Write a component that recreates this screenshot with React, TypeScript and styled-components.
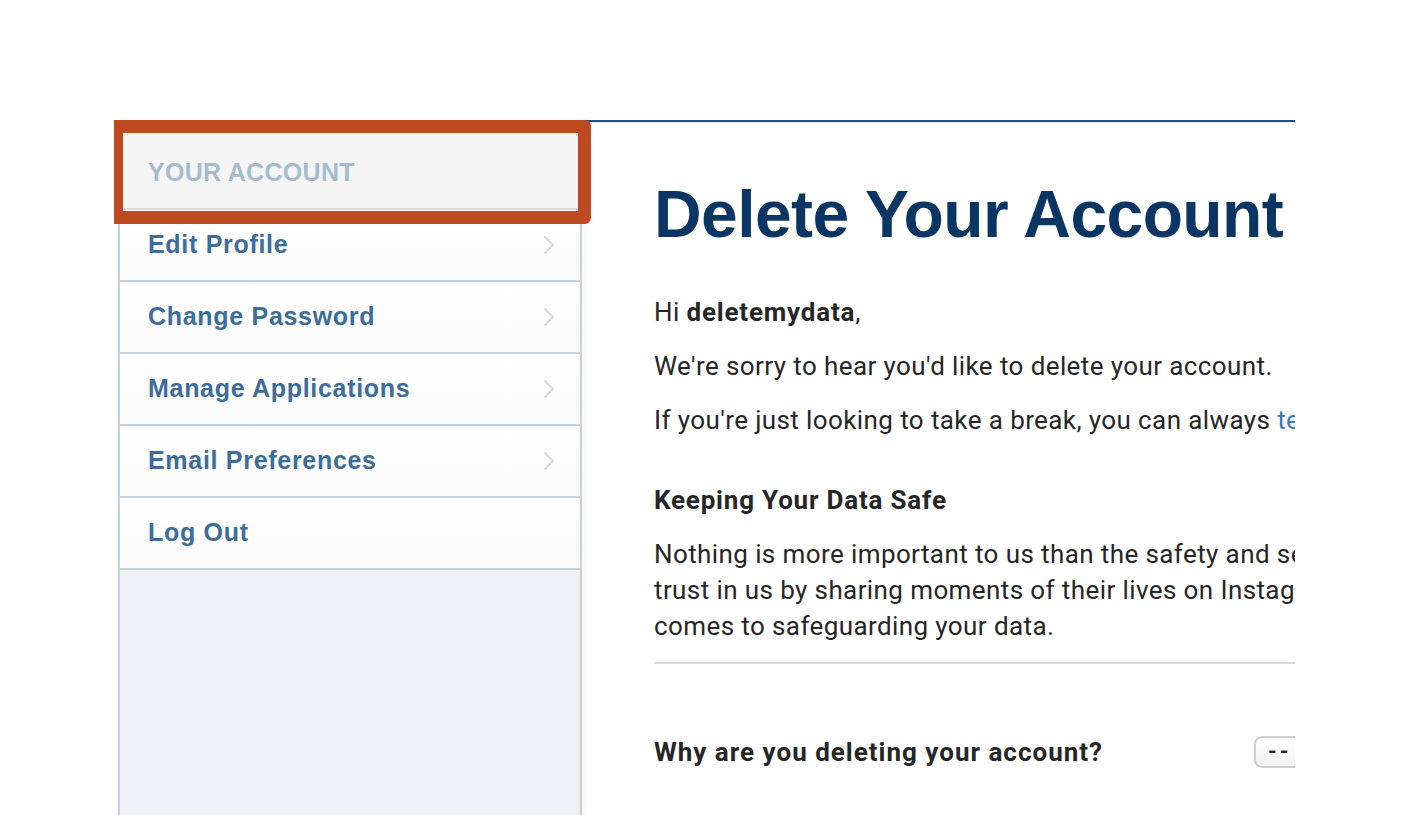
import React from 'react';
import styled, { createGlobalStyle } from 'styled-components';

const GlobalStyle = createGlobalStyle`
  html, body {
    margin: 0;
    padding: 0;
    background: #ffffff;
    overflow: hidden;
  }
  body {
    font-family: Roboto, "Liberation Sans", Arial, sans-serif;
  }
`;

const menuItems = [
  { label: 'Edit Profile', arrow: true },
  { label: 'Change Password', arrow: true },
  { label: 'Manage Applications', arrow: true },
  { label: 'Email Preferences', arrow: true },
  { label: 'Log Out', arrow: false },
];

const safetyLines = [
  'Nothing is more important to us than the safety and security of the people who place their',
  'trust in us by sharing moments of their lives on Instagram. We use industry-leading protections when it',
  'comes to safeguarding your data.',
];

function Chevron() {
  return (
    <svg width="14" height="22" viewBox="0 0 14 22" fill="none">
      <path d="M3 3l8 8-8 8" stroke="#d6d9dc" strokeWidth="2.2" strokeLinecap="round" strokeLinejoin="round" />
    </svg>
  );
}

export default function App() {
  return (
    <>
      <GlobalStyle />
      <Page>
        <Layout>
          <Sidebar>
            <SideHeader>Your Account</SideHeader>
            {menuItems.map((item) => (
              <MenuRow key={item.label}>
                <MenuLabel>{item.label}</MenuLabel>
                {item.arrow && <Chevron />}
              </MenuRow>
            ))}
            <SideFill />
            <Highlight />
          </Sidebar>
          <Main>
            <Title>Delete Your Account</Title>
            <Para>
              Hi <b>deletemydata</b>,
            </Para>
            <Para>We're sorry to hear you'd like to delete your account.</Para>
            <Para>
              If you're just looking to take a break, you can always <Link>temporarily disable your account</Link> instead.
            </Para>
            <SubHead>Keeping Your Data Safe</SubHead>
            <Body>
              {safetyLines.map((line) => (
                <BodyLine key={line}>{line}</BodyLine>
              ))}
            </Body>
            <Divider />
            <ReasonRow>
              <ReasonLabel>Why are you deleting your account?</ReasonLabel>
              <Select>--</Select>
            </ReasonRow>
          </Main>
        </Layout>
      </Page>
    </>
  );
}

const Page = styled.div`
  width: 1405px;
  height: 815px;
  overflow: hidden;
  padding-top: 120px;
  box-sizing: border-box;
`;

const Layout = styled.div`
  display: flex;
  margin-left: 118px;
  width: 1177px;
`;

const Sidebar = styled.nav`
  position: relative;
  width: 464px;
  flex-shrink: 0;
  display: flex;
  flex-direction: column;
  border-left: 2px solid #c6d1dc;
  border-right: 2px solid #c6d1dc;
  box-sizing: border-box;
  box-shadow: 3px 0 4px rgba(0, 0, 0, 0.04);
`;

const SideHeader = styled.div`
  height: 90px;
  box-sizing: border-box;
  background: #f5f5f5;
  border-bottom: 2px solid #dadada;
  padding: 38px 0 0 28px;
  font-family: "Liberation Sans", Arial, sans-serif;
  font-weight: 700;
  font-size: 25px;
  letter-spacing: 0.3px;
  text-transform: uppercase;
  color: #a6bccd;
`;

const MenuRow = styled.div`
  height: 72px;
  box-sizing: border-box;
  display: flex;
  align-items: center;
  justify-content: space-between;
  padding: 0 24px 0 28px;
  background: linear-gradient(#ffffff, #fafafa);
  border-bottom: 2px solid #c6d1dc;
`;

const MenuLabel = styled.span`
  font-family: "Liberation Sans", Arial, sans-serif;
  font-weight: 700;
  font-size: 25px;
  letter-spacing: 0.7px;
  color: #3d6d9a;
  margin-top: -1px;
`;

const SideFill = styled.div`
  height: 260px;
  background: #edf1f4;
`;

const Highlight = styled.div`
  position: absolute;
  left: -6px;
  top: 0;
  width: 477px;
  height: 104px;
  box-sizing: border-box;
  border: 13px solid #bd4a20;
  border-left-width: 9px;
  border-radius: 0 6px 6px 0;
`;

const Main = styled.main`
  flex: 1;
  min-width: 0;
  overflow: hidden;
  border-top: 2px solid #1f4e79;
  box-shadow: inset 0 3px 3px -2px rgba(0, 0, 0, 0.12);
  padding: 48px 0 0 72px;
  white-space: nowrap;
`;

const Title = styled.h1`
  margin: 0 0 36px;
  font-family: "Liberation Sans", Arial, sans-serif;
  font-weight: 700;
  font-size: 66px;
  line-height: 88px;
  letter-spacing: -0.6px;
  color: #0b3563;
`;

const Para = styled.p`
  margin: 0 0 18px;
  font-size: 26px;
  line-height: 36px;
  letter-spacing: 0.4px;
  color: #262626;
  b {
    font-weight: 700;
    letter-spacing: 0.8px;
  }
`;

const Link = styled.span`
  color: #3e7bb0;
`;

const SubHead = styled.h3`
  margin: 44px 0 18px;
  font-size: 26px;
  line-height: 36px;
  font-weight: 700;
  letter-spacing: 0.8px;
  color: #262626;
`;

const Body = styled.div`
  display: flex;
  flex-direction: column;
`;

const BodyLine = styled.span`
  font-size: 26px;
  line-height: 36px;
  letter-spacing: 0.4px;
  color: #262626;
`;

const Divider = styled.div`
  height: 2px;
  background: #dbdbdb;
  margin-top: 18px;
`;

const ReasonRow = styled.div`
  display: flex;
  align-items: center;
  margin-top: 72px;
`;

const ReasonLabel = styled.span`
  font-size: 26px;
  font-weight: 700;
  letter-spacing: 1px;
  color: #262626;
  width: 600px;
  flex-shrink: 0;
`;

const Select = styled.div`
  height: 32px;
  min-width: 120px;
  box-sizing: border-box;
  border: 2px solid #d0d0d0;
  border-radius: 8px;
  background: linear-gradient(#ffffff, #f2f2f2);
  padding: 0 12px;
  font-size: 22px;
  line-height: 28px;
  letter-spacing: 3px;
  font-weight: 700;
  color: #262626;
`;
